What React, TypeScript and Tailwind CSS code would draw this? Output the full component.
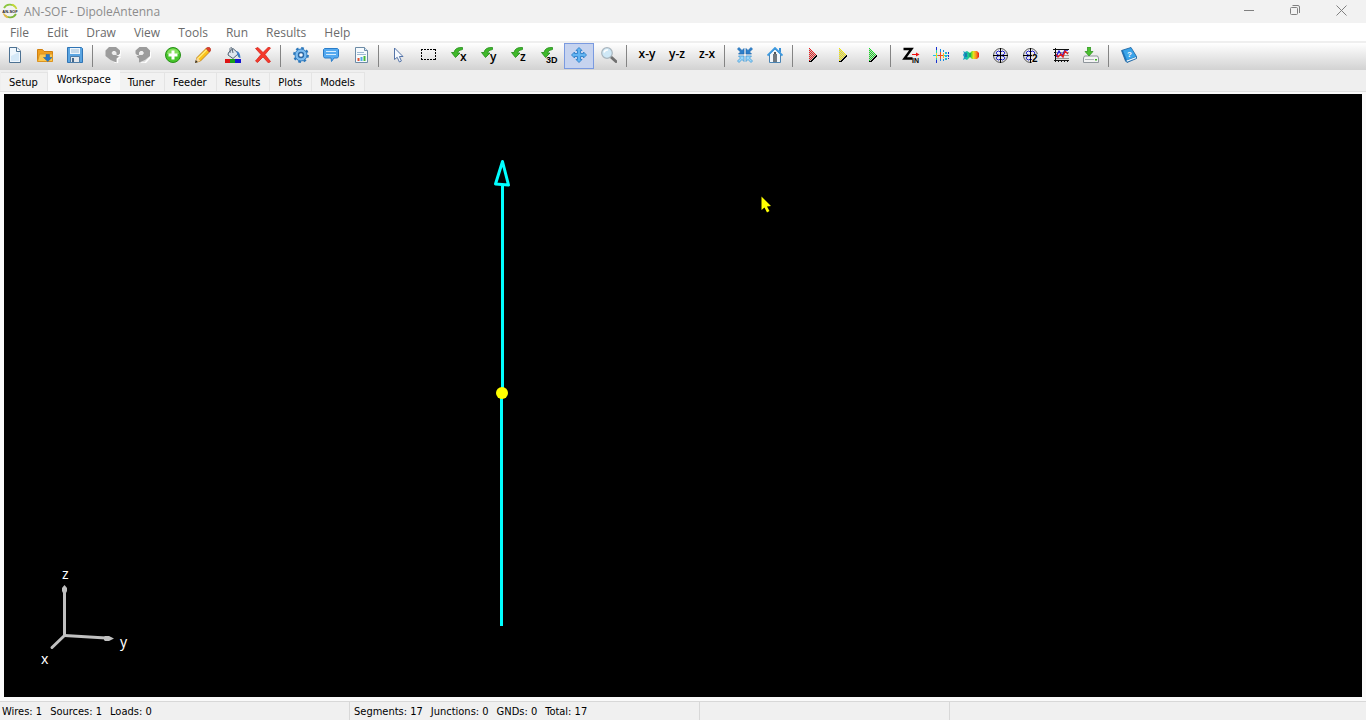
import { useId, useState } from "react";
import type { ReactNode } from "react";

type Tool = { id: string; label: string; icon: ReactNode };

const MENUS = ["File", "Edit", "Draw", "View", "Tools", "Run", "Results", "Help"];

const TABS = ["Setup", "Workspace", "Tuner", "Feeder", "Results", "Plots", "Models"];

const STATUS = [
  { width: "w-[350px] pl-[2px]", items: ["Wires: 1", "Sources: 1", "Loads: 0"] },
  { width: "w-[350px] pl-1", items: ["Segments: 17", "Junctions: 0", "GNDs: 0", "Total: 17"] },
  { width: "w-[250px]", items: [] },
];

const TOOL_GROUPS: Tool[][] = [
  [
    { id: "new", label: "New", icon: <NewIcon /> },
    { id: "open", label: "Open", icon: <OpenIcon /> },
    { id: "save", label: "Save", icon: <SaveIcon /> },
  ],
  [
    { id: "undo", label: "Undo", icon: <UndoIcon /> },
    { id: "redo", label: "Redo", icon: <RedoIcon /> },
    { id: "add", label: "Add", icon: <AddIcon /> },
    { id: "modify", label: "Modify", icon: <PencilIcon /> },
    { id: "color", label: "Color", icon: <PaintIcon /> },
    { id: "delete", label: "Delete", icon: <DeleteIcon /> },
  ],
  [
    { id: "preferences", label: "Preferences", icon: <GearIcon /> },
    { id: "comments", label: "Comments", icon: <CommentIcon /> },
    { id: "report", label: "Report", icon: <ReportIcon /> },
  ],
  [
    { id: "select", label: "Select", icon: <PointerIcon /> },
    { id: "box", label: "Selection box", icon: <MarqueeIcon /> },
    { id: "rot-x", label: "Rotate around x", icon: <RotateIcon axis="x" /> },
    { id: "rot-y", label: "Rotate around y", icon: <RotateIcon axis="y" /> },
    { id: "rot-z", label: "Rotate around z", icon: <RotateIcon axis="z" /> },
    { id: "rot-3d", label: "Rotate 3D", icon: <RotateIcon axis="3D" small /> },
    { id: "move", label: "Move", icon: <MoveIcon /> },
    { id: "zoom", label: "Zoom", icon: <ZoomIcon /> },
  ],
  [
    { id: "xy", label: "View x-y plane", icon: <PlaneLabel text="x-y" /> },
    { id: "yz", label: "View y-z plane", icon: <PlaneLabel text="y-z" /> },
    { id: "zx", label: "View z-x plane", icon: <PlaneLabel text="z-x" /> },
  ],
  [
    { id: "center", label: "Center", icon: <CenterIcon /> },
    { id: "home", label: "Initial view", icon: <HomeIcon /> },
  ],
  [
    { id: "run-all", label: "Run all", icon: <RunIcon color="#ee1c1c" /> },
    { id: "run-currents", label: "Run currents", icon: <RunIcon color="#f2e600" /> },
    { id: "run-fields", label: "Run fields", icon: <RunIcon color="#10e020" /> },
  ],
  [
    { id: "zin", label: "Input impedance", icon: <ImpedanceIcon /> },
    { id: "currents", label: "Currents", icon: <CurrentsIcon /> },
    { id: "pattern", label: "Radiation pattern", icon: <PatternIcon /> },
    { id: "polar", label: "Polar plot", icon: <PolarIcon /> },
    { id: "polar2", label: "Polar plot 2", icon: <PolarIcon second /> },
    { id: "plot", label: "Plot", icon: <PlotIcon /> },
    { id: "export", label: "Export", icon: <ExportIcon /> },
  ],
  [{ id: "help", label: "User guide", icon: <BookIcon /> }],
];

export default function App() {
  const [activeTab, setActiveTab] = useState("Workspace");
  const [activeTool, setActiveTool] = useState("move");

  return (
    <div className="flex min-h-screen flex-col bg-[#efefef] font-['Noto_Sans',sans-serif] text-black select-none">
      <TitleBar title="AN-SOF - DipoleAntenna" />
      <MenuBar />
      <Toolbar active={activeTool} onSelect={setActiveTool} />
      <TabBar active={activeTab} onSelect={setActiveTab} />
      <main className="flex flex-1 border-t border-[#e0e0e0] bg-[#fafafa] px-1 pt-[2px] pb-1">
        <Workspace />
      </main>
      <StatusBar />
    </div>
  );
}

function TitleBar({ title }: { title: string }) {
  return (
    <header className="flex h-[23px] bg-[#f2f2f2] pt-[1px] pr-[2px] pl-[2px]">
      <span className="pt-[2px]">
        <LogoIcon />
      </span>
      <h1 className="ml-[6px] flex-1 font-['Open_Sans',sans-serif] text-[12px] leading-[22px] text-[#8c8c8c]">
        {title}
      </h1>
      <div className="flex h-[19px] text-[#808080]">
        <button aria-label="Minimize" className="flex w-[46px] items-center justify-center">
          <svg width="11" height="11" fill="none" stroke="currentColor">
            <path d="M0 5.5h10" />
          </svg>
        </button>
        <button aria-label="Restore" className="flex w-[46px] items-center justify-center">
          <svg width="11" height="11" fill="none" stroke="currentColor">
            <rect x="0.5" y="2.5" width="7" height="7" rx="1" />
            <path d="M2.5 0.5H8a1.5 1.5 0 0 1 1.5 1.5V8" />
          </svg>
        </button>
        <button aria-label="Close" className="flex w-[46px] items-center justify-center">
          <svg width="11" height="11" fill="none" stroke="currentColor">
            <path d="M0.5 0.5l10 10M10.5 0.5l-10 10" />
          </svg>
        </button>
      </div>
    </header>
  );
}

function MenuBar() {
  return (
    <nav className="flex h-[18px] bg-white pl-[1px]">
      {MENUS.map((menu) => (
        <button
          key={menu}
          className="px-[9px] pt-[1px] font-['Open_Sans',sans-serif] text-[12px] leading-[17px] text-[#6b6b6b]"
        >
          {menu}
        </button>
      ))}
    </nav>
  );
}

function Toolbar({ active, onSelect }: { active: string; onSelect: (id: string) => void }) {
  return (
    <div
      role="toolbar"
      className="mt-[2px] flex h-[27px] bg-linear-to-b from-white to-[#d2d2d2]"
    >
      {TOOL_GROUPS.map((group, i) => (
        <div key={group[0].id} className="flex">
          {i > 0 && <div className="mt-[2px] mr-[5px] ml-[2px] h-[22px] w-px bg-[#848484]" />}
          {group.map((tool) => (
            <button
              key={tool.id}
              aria-label={tool.label}
              aria-pressed={tool.id === active}
              onClick={() => onSelect(tool.id)}
              className={`flex h-[26px] w-[30px] items-center justify-center border pb-[2px] ${
                tool.id === active ? "border-[#7a9ae0] bg-[#c6d3ef]" : "border-transparent"
              }`}
            >
              {tool.icon}
            </button>
          ))}
        </div>
      ))}
    </div>
  );
}

function TabBar({ active, onSelect }: { active: string; onSelect: (tab: string) => void }) {
  return (
    <div role="tablist" className="flex h-[21px] items-end pl-[1px]">
      {TABS.map((tab) => (
        <button
          key={tab}
          role="tab"
          aria-selected={tab === active}
          onClick={() => onSelect(tab)}
          className={`font-['DejaVu_Sans_Condensed','DejaVu_Sans',sans-serif] text-[11px] whitespace-nowrap ${
            tab === active
              ? "h-[21px] bg-[#fafafa] px-[9px]"
              : "h-[19px] border-t border-r border-[#e4e4e4] bg-[#f2f2f2] pt-[2px] pr-[9px] pl-2"
          }`}
        >
          {tab}
        </button>
      ))}
    </div>
  );
}

function Workspace() {
  return (
    <svg className="min-h-[603px] w-full flex-1 bg-black" role="img" aria-label="Dipole antenna wire">
      <g stroke="#00ffff" strokeWidth="3" fill="none" strokeLinejoin="round">
        <path d="M498.5 92V299M497.5 299V532" />
        <path d="M498.5 67.5l6 23.5l-13-1z" />
      </g>
      <circle cx="498" cy="299" r="6" fill="#ffff00" />

      <g stroke="#c0c0c0" strokeWidth="3" fill="none" strokeLinecap="round">
        <path d="M60.5 541V498" />
        <path d="M60.5 541.5L102 544" />
        <path d="M60.5 541.5L48 553.5" />
      </g>
      <path d="M60.5 491l2.5 3v3l-1 2h-3l-1-2v-3zM110 544.5l-5-2.5h-4l-1 1v3l1 1h4z" fill="#c0c0c0" />
      <g fill="#ffffff" fontSize="14" fontFamily="'Noto Sans', sans-serif">
        <text x="58" y="485">z</text>
        <text x="116" y="553">y</text>
        <text x="37" y="570">x</text>
      </g>

      <path d="M757.5 102.5v13.5l3-2.5l2.5 5l2.5-1.5l-2.5-4.5l4-0.5z" fill="#ffff00" />
    </svg>
  );
}

function StatusBar() {
  return (
    <footer className="flex h-[20px] border-t border-[#d8d8d8] bg-[#f0f0f0] font-['DejaVu_Sans_Condensed','DejaVu_Sans',sans-serif] text-[11px] leading-[20px]">
      {STATUS.map((panel) => (
        <div
          key={panel.width}
          className={`flex gap-2 border-r border-[#d8d8d8] whitespace-nowrap ${panel.width}`}
        >
          {panel.items.map((item) => (
            <span key={item}>{item}</span>
          ))}
        </div>
      ))}
    </footer>
  );
}

function LogoIcon() {
  return (
    <svg width="16" height="16" viewBox="0 0 16 16" fill="none">
      <path d="M2 5A7 6.5 0 0 1 13.5 4" stroke="#8cc63f" strokeWidth="1.8" />
      <path d="M10 1.5A7 6.5 0 0 1 14.5 6" stroke="#c9d93a" strokeWidth="1.5" />
      <path d="M14 11A7 6.5 0 0 1 2.5 12" stroke="#7db53a" strokeWidth="1.8" />
      <path d="M6 14.5A7 6.5 0 0 1 1.5 10.5" stroke="#e8b84a" strokeWidth="1.5" />
      <text
        x="8"
        y="10"
        textAnchor="middle"
        fontSize="4"
        fontWeight="700"
        fontFamily="'Liberation Sans', sans-serif"
        fill="#222"
      >
        AN-SOF
      </text>
    </svg>
  );
}

function NewIcon() {
  return (
    <svg width="16" height="16" viewBox="0 0 16 16">
      <path d="M2.5 0.5h7.5l3.5 3.5v11.5h-11z" fill="#f0f7fd" stroke="#4c7192" />
      <path d="M4 9l8-4v9H4z" fill="#d5e8f7" />
      <path d="M9.5 0.5v4h4" fill="#fff" stroke="#4c7192" />
    </svg>
  );
}

function OpenIcon() {
  return (
    <svg width="16" height="16" viewBox="0 0 16 16">
      <path d="M0.5 14V2.5h5l1.5 2h8.5V14z" fill="#f0a020" stroke="#d08010" />
      <path d="M0.5 14.5L2.5 7h13v7.5z" fill="#fcc850" stroke="#dc9420" />
      <path d="M9 7.5h3.5v3h2.5L10.8 14.5L6.5 10.5H9z" fill="#2878c8" stroke="#1a5ca0" strokeWidth="0.5" />
    </svg>
  );
}

function SaveIcon() {
  return (
    <svg width="16" height="16" viewBox="0 0 16 16">
      <path d="M0.5 0.5h14l1 1v14H0.5z" fill="#5aa5e2" stroke="#2f74b5" />
      <path d="M3 1h10v6H3z" fill="#eef6fc" />
      <path d="M4 3h8M4 5h8" stroke="#9abbd6" />
      <path d="M3.5 9.5h9v6h-9z" fill="#e4e8ec" stroke="#4f7ea8" />
      <path d="M5 11h2v4H5z" fill="#46698c" />
    </svg>
  );
}

function UndoIcon() {
  return (
    <svg width="16" height="16" viewBox="0 0 16 16">
      <path d="M15 3v5h-4M9.5 15.5h3v-3.5l3-2" fill="none" stroke="#fff" strokeWidth="1.5" />
      <path d="M0.5 3.5L4 0h7l4 3.5v3l-1.5 1.5h-2V5.5L10 4H8L6.5 6l1.500 2h3l3 1.500l-2.500 2v4L5.500 13L0.500 9z" fill="#9c9c9c" />
    </svg>
  );
}

function RedoIcon() {
  return (
    <svg width="16" height="16" viewBox="0 0 16 16">
      <path d="M15.5 5v5L10 16H6" fill="none" stroke="#fff" strokeWidth="1.5" />
      <path d="M15 3.5L11.500 0h-7L0.500 3.500v3L2 8h2V5.500L5.500 4h2L9 6L7.500 8h-3l-3 1.500l2.500 2v4L10 13l5-4z" fill="#9c9c9c" />
    </svg>
  );
}

function AddIcon() {
  return (
    <svg width="16" height="16" viewBox="0 0 16 16">
      <circle cx="8" cy="8" r="7.5" fill="#48c52c" stroke="#289018" />
      <path d="M2 7a6 5.5 0 0 1 12 0z" fill="#82de5c" />
      <path d="M8 3.5v9M3.5 8h9" stroke="#fff" strokeWidth="3" />
    </svg>
  );
}

function PencilIcon() {
  return (
    <svg width="16" height="16" viewBox="0 0 16 16">
      <path d="M0.5 15.5l1.5-5L11 1.5l3.5 3.5L5.5 14z" fill="#fbc21c" stroke="#b57410" strokeWidth="0.8" />
      <path d="M3 11.5l9-9" stroke="#ffec80" strokeWidth="1.3" />
      <path d="M11 1.5l1.5-1.2h1.8L15.7 2v1.5L14.5 5z" fill="#e0402c" stroke="#a82818" strokeWidth="0.6" />
      <path d="M0.5 15.5l1.5-5l3.5 3.5z" fill="#f8d8a0" />
      <path d="M0 16l0.8-3l2 2z" fill="#333" />
    </svg>
  );
}

function PaintIcon() {
  return (
    <svg width="16" height="16" viewBox="0 0 16 16">
      <path d="M3.5 5.5L8 1.5l5.5 5L8 11.5L3 8z" fill="#dfe7ee" stroke="#4f6274" />
      <path d="M5 6V1.5Q5.5 0 7 1l1 5" fill="none" stroke="#596b7c" />
      <path d="M11 4q4 0 4.5 7q-3 0-3.5-5z" fill="#3d7dc4" />
      <path d="M0 12h5v4H0z" fill="#dd1414" />
      <path d="M5 12h5v4H5z" fill="#18a018" />
      <path d="M10 12h6v4h-6z" fill="#1414d0" />
    </svg>
  );
}

function DeleteIcon() {
  return (
    <svg width="16" height="16" viewBox="0 0 16 16">
      <path
        d="M0.5 1.5L3 0.5l5 5L13.5 0l2 1L10 7.5l5.5 7l-2 1.5L8 10L2.5 15.5L0.5 14L6 7.5z"
        fill="#f5382b"
        stroke="#d11c14"
        strokeWidth="0.7"
      />
    </svg>
  );
}

function GearIcon() {
  return (
    <svg width="16" height="16" viewBox="0 0 16 16">
      <circle cx="8" cy="8" r="6.8" fill="none" stroke="#2c78bc" strokeWidth="2.2" strokeDasharray="2.67 2.67" />
      <circle cx="8" cy="8" r="6" fill="#7cbcf0" stroke="#2f7cc0" />
      <circle cx="8" cy="8" r="3.2" fill="#2b68a5" />
      <circle cx="8" cy="8" r="1.8" fill="#f4f8fc" />
    </svg>
  );
}

function CommentIcon() {
  return (
    <svg width="16" height="16" viewBox="0 0 16 16">
      <path
        d="M1.5 1.5h13l1 1v7l-1 1.5H11L8.5 14.5L8 11H1.5L0.5 9.5v-7z"
        fill="#55aaf0"
        stroke="#2a7cc8"
      />
      <path d="M3 4.5h10M3 7.5h10" stroke="#d6edff" />
    </svg>
  );
}

function ReportIcon() {
  return (
    <svg width="16" height="16" viewBox="0 0 16 16">
      <path d="M2.5 0.5h9l3 3v12h-12z" fill="#f6fafd" stroke="#6c8ba6" />
      <path d="M11.5 0.5v3h3" fill="#d8e8f4" stroke="#6c8ba6" />
      <path d="M4 5.5h7M4 7.5h9" stroke="#9db9d2" />
      <path d="M5.5 14v-3" stroke="#e05030" strokeWidth="2" />
      <path d="M8.5 14v-4" stroke="#50a8e8" strokeWidth="2" />
      <path d="M11.5 14V9" stroke="#48b838" strokeWidth="2" />
    </svg>
  );
}

function PointerIcon() {
  return (
    <svg width="16" height="16" viewBox="0 0 16 16">
      <path
        d="M3.5 1v11.5l2.7-2.2l2.2 4.7l2-1l-2-4.5h3.6z"
        fill="#f6faff"
        stroke="#5574a8"
      />
    </svg>
  );
}

function MarqueeIcon() {
  return (
    <svg width="16" height="16" viewBox="0 0 16 16">
      <path
        d="M0 2.5h15M0 12.5h15M0.5 2v11M14.5 2v11"
        fill="none"
        stroke="#000"
        strokeDasharray="2 1"
        shapeRendering="crispEdges"
      />
    </svg>
  );
}

function RotateIcon({ axis, small }: { axis: string; small?: boolean }) {
  return (
    <svg width="16" height="16" viewBox="0 0 16 16" overflow="visible">
      <path
        d="M11.5 0.5Q4 0 3 5.5H0.5L4.5 10.5L9 6H6.5Q7 3 11.5 2.5z"
        fill="#3fb82a"
        stroke="#1f8c18"
        strokeWidth="0.8"
      />
      {small ? (
        <text x="5" y="16" fontSize="9" fontWeight="700" fontFamily="'Liberation Sans', sans-serif">
          {axis}
        </text>
      ) : (
        <text x="9" y="14" fontSize="12" fontWeight="600" fontFamily="'Open Sans', sans-serif">
          {axis}
        </text>
      )}
    </svg>
  );
}

function MoveIcon() {
  return (
    <svg width="16" height="16" viewBox="0 0 16 16">
      <path
        d="M8 0.5l3 3H9.5v3h3V5l3 3l-3 3V9.5h-3v3H11l-3 3l-3-3h1.5v-3h-3V11l-3-3l3-3v1.5h3v-3H5z"
        fill="#62b4f2"
        stroke="#2e7fc8"
        strokeWidth="0.9"
      />
    </svg>
  );
}

function ZoomIcon() {
  return (
    <svg width="16" height="16" viewBox="0 0 16 16">
      <path d="M10 10l5 4.5" stroke="#707070" strokeWidth="3" strokeLinecap="round" />
      <circle cx="6" cy="6" r="5.3" fill="#cfe8f6" stroke="#a9b5bd" strokeWidth="1.2" />
      <path d="M3 5.5q1-3 4-2.5" stroke="#fff" strokeWidth="1.5" fill="none" />
    </svg>
  );
}

function PlaneLabel({ text }: { text: string }) {
  return (
    <span className="pb-[2px] font-['Open_Sans',sans-serif] text-[12px] leading-[16px] font-semibold">
      {text}
    </span>
  );
}

function CenterIcon() {
  return (
    <svg width="16" height="16" viewBox="0 0 16 16" strokeWidth="0.7">
      <path d="M7 7H1.5L3.5 5L0.5 2L2 0.5L5 3.5L7 1.5z" fill="#2b80cc" stroke="#1c68b0" />
      <path d="M9 7h5.5l-2-2l3-3L14 0.5l-3 3l-2-2z" fill="#2b80cc" stroke="#1c68b0" />
      <path d="M7 9H1.5l2 2l-3 3L2 15.5l3-3l2 2z" fill="#9ad8fa" stroke="#2e8fd4" />
      <path d="M9 9h5.5l-2 2l3 3l-1.5 1.5l-3-3l-2 2z" fill="#9ad8fa" stroke="#2e8fd4" />
    </svg>
  );
}

function HomeIcon() {
  return (
    <svg width="16" height="16" viewBox="0 0 16 16">
      <path d="M2.5 7v8.5h11V7L8 2z" fill="#f2f6fa" stroke="#4a84b4" />
      <path d="M12 1h2v5l-2-2z" fill="#3a8fd4" />
      <path d="M0.5 8.5L8 1l7.5 7.5" fill="none" stroke="#3d9ae0" strokeWidth="1.8" />
      <path d="M6 7h4v8H6z" fill="#70787f" />
      <path d="M7 5h2v2H7z" fill="#555" />
    </svg>
  );
}

function RunIcon({ color }: { color: string }) {
  const id = useId();
  return (
    <svg width="16" height="16" viewBox="0 0 16 16" shapeRendering="crispEdges">
      <defs>
        <pattern id={id} width="2" height="2" patternUnits="userSpaceOnUse">
          <path d="M0 0h2v2H0z" fill="#c8c8c8" />
          <path d="M1 0h1v1H1zM0 1h1v1H0z" fill={color} />
        </pattern>
      </defs>
      <path d="M4 1l8 7l-7 7H4z" fill={`url(#${id})`} />
      <path d="M4 14.5h2l6-6" fill="none" stroke="#000" />
    </svg>
  );
}

function ImpedanceIcon() {
  return (
    <svg width="16" height="16" viewBox="0 0 16 16" overflow="visible">
      <path d="M0.5 2h8L1.5 11.5h8" fill="none" stroke="#000" strokeWidth="2.4" />
      <path d="M9 7.5h6" stroke="#f01010" />
      <path d="M13 5.5l3.5 2l-3.5 2z" fill="#f01010" />
      <text x="9" y="16" fontSize="7" fontWeight="700" fontFamily="'Liberation Sans', sans-serif">
        IN
      </text>
    </svg>
  );
}

function CurrentsIcon() {
  return (
    <svg width="16" height="16" viewBox="0 0 16 16" shapeRendering="crispEdges" fill="none">
      <path d="M0 8.5h16" stroke="#20c8e0" />
      <path d="M5 8.5h5" stroke="#f04020" />
      <path d="M3.5 0v3M3.5 13v3" stroke="#1830d0" />
      <path d="M3.5 3v3M3.5 11v2" stroke="#20d0b0" />
      <path d="M3.5 6v5" stroke="#e8d820" />
      <path d="M7.5 2v3M7.5 12v2" stroke="#1888e0" />
      <path d="M7.5 5v7" stroke="#f05020" />
      <path d="M10.5 3v11" stroke="#1888e0" strokeDasharray="2 1" />
      <path d="M10.5 6v5" stroke="#e8c020" />
      <path d="M13 5v8" stroke="#20b8d0" strokeWidth="2" strokeDasharray="2 1" />
      <path d="M15.5 5v7" stroke="#1830d0" strokeDasharray="2 1" />
    </svg>
  );
}

function PatternIcon() {
  const id = useId();
  return (
    <svg width="16" height="16" viewBox="0 0 16 16">
      <defs>
        <linearGradient id={id}>
          <stop offset="0" stopColor="#1890d0" />
          <stop offset="0.3" stopColor="#18c8a0" />
          <stop offset="0.48" stopColor="#30d830" />
          <stop offset="0.65" stopColor="#e8e020" />
          <stop offset="0.82" stopColor="#f89020" />
          <stop offset="1" stopColor="#e81818" />
        </linearGradient>
      </defs>
      <path
        d="M0 4l2 1l2-1l3 2l2-2h5l2 2v4l-2 2H9L7 10l-3 3l-2-1l-2 1l1-3l-1-2l1-2z"
        fill={`url(#${id})`}
      />
      <path d="M2 6l2 4M4 6l-2 4M7 6v4" stroke="#1858a8" strokeWidth="0.7" />
    </svg>
  );
}

function PolarIcon({ second }: { second?: boolean }) {
  return (
    <svg width="16" height="16" viewBox="0 0 16 16" fill="none">
      <circle cx="7.5" cy="8.5" r="7" stroke="#555" />
      <path
        d="M7.5 8.5Q2 7.5 3.5 5Q5.5 3 7.5 5Q9.5 3 11.5 5Q13 7.5 7.5 8.5Q2 9.5 3.5 12Q5.5 14 7.5 12Q9.5 14 11.5 12Q13 9.5 7.5 8.5"
        stroke="#1818c8"
      />
      <path d="M7.5 1v15M0 8.5h15" stroke="#000" shapeRendering="crispEdges" />
      {second && (
        <>
          <path d="M9 7h7v9H9z" fill="#e6e6e6" />
          <text x="9" y="15" fontSize="10" fontWeight="700" fill="#000" fontFamily="'Liberation Sans', sans-serif">
            2
          </text>
        </>
      )}
    </svg>
  );
}

function PlotIcon() {
  return (
    <svg width="16" height="16" viewBox="0 0 16 16" fill="none">
      <path d="M2 2.5h14M2 5.5h14M2 8.5h14M2 11.5h14" stroke="#999" />
      <path d="M3 10l3-6l3 5l3-6h3" stroke="#1818e0" strokeWidth="1.3" />
      <path d="M3 7l2 3l3-3l2 3l2-6l3 3" stroke="#e01818" strokeWidth="1.3" />
      <g stroke="#111" shapeRendering="crispEdges">
        <path d="M2.5 1v14M0 2.5h16M1 13.5h15M1 5.5h1M1 8.5h1" />
        <path d="M5.5 13v2M8.5 13v2M11.5 13v2M14.5 13v2" />
      </g>
    </svg>
  );
}

function ExportIcon() {
  return (
    <svg width="16" height="16" viewBox="0 0 16 16">
      <path d="M1.5 9h13l1 2v4.5h-15V11z" fill="#f4f4f4" stroke="#8e959b" />
      <path d="M2 12.5h9" stroke="#b0b6bb" />
      <path d="M12 12h2v1.5h-2z" fill="#38b020" />
      <path d="M4.5 0h3v4.5H10L6 9L2 4.5h2.5z" fill="#4cc030" stroke="#258c18" strokeWidth="0.7" />
    </svg>
  );
}

function BookIcon() {
  return (
    <svg width="16" height="16" viewBox="0 0 16 16">
      <path d="M0.5 3.5L10 0.5l5.5 9v2L6 15.5L4.5 14z" fill="#1c78c0" stroke="#175e9c" strokeWidth="0.8" />
      <path d="M5.5 13.5l9.5-3.5v1.2l-9 3.5z" fill="#eef5fa" />
      <path d="M2 3.5l8-2.5l5 8.5l-9 3.5z" fill="#3ba4e8" />
      <text x="6" y="10" fontSize="8" fontWeight="700" fill="#fff" fontFamily="'Liberation Sans', sans-serif">
        ?
      </text>
    </svg>
  );
}
